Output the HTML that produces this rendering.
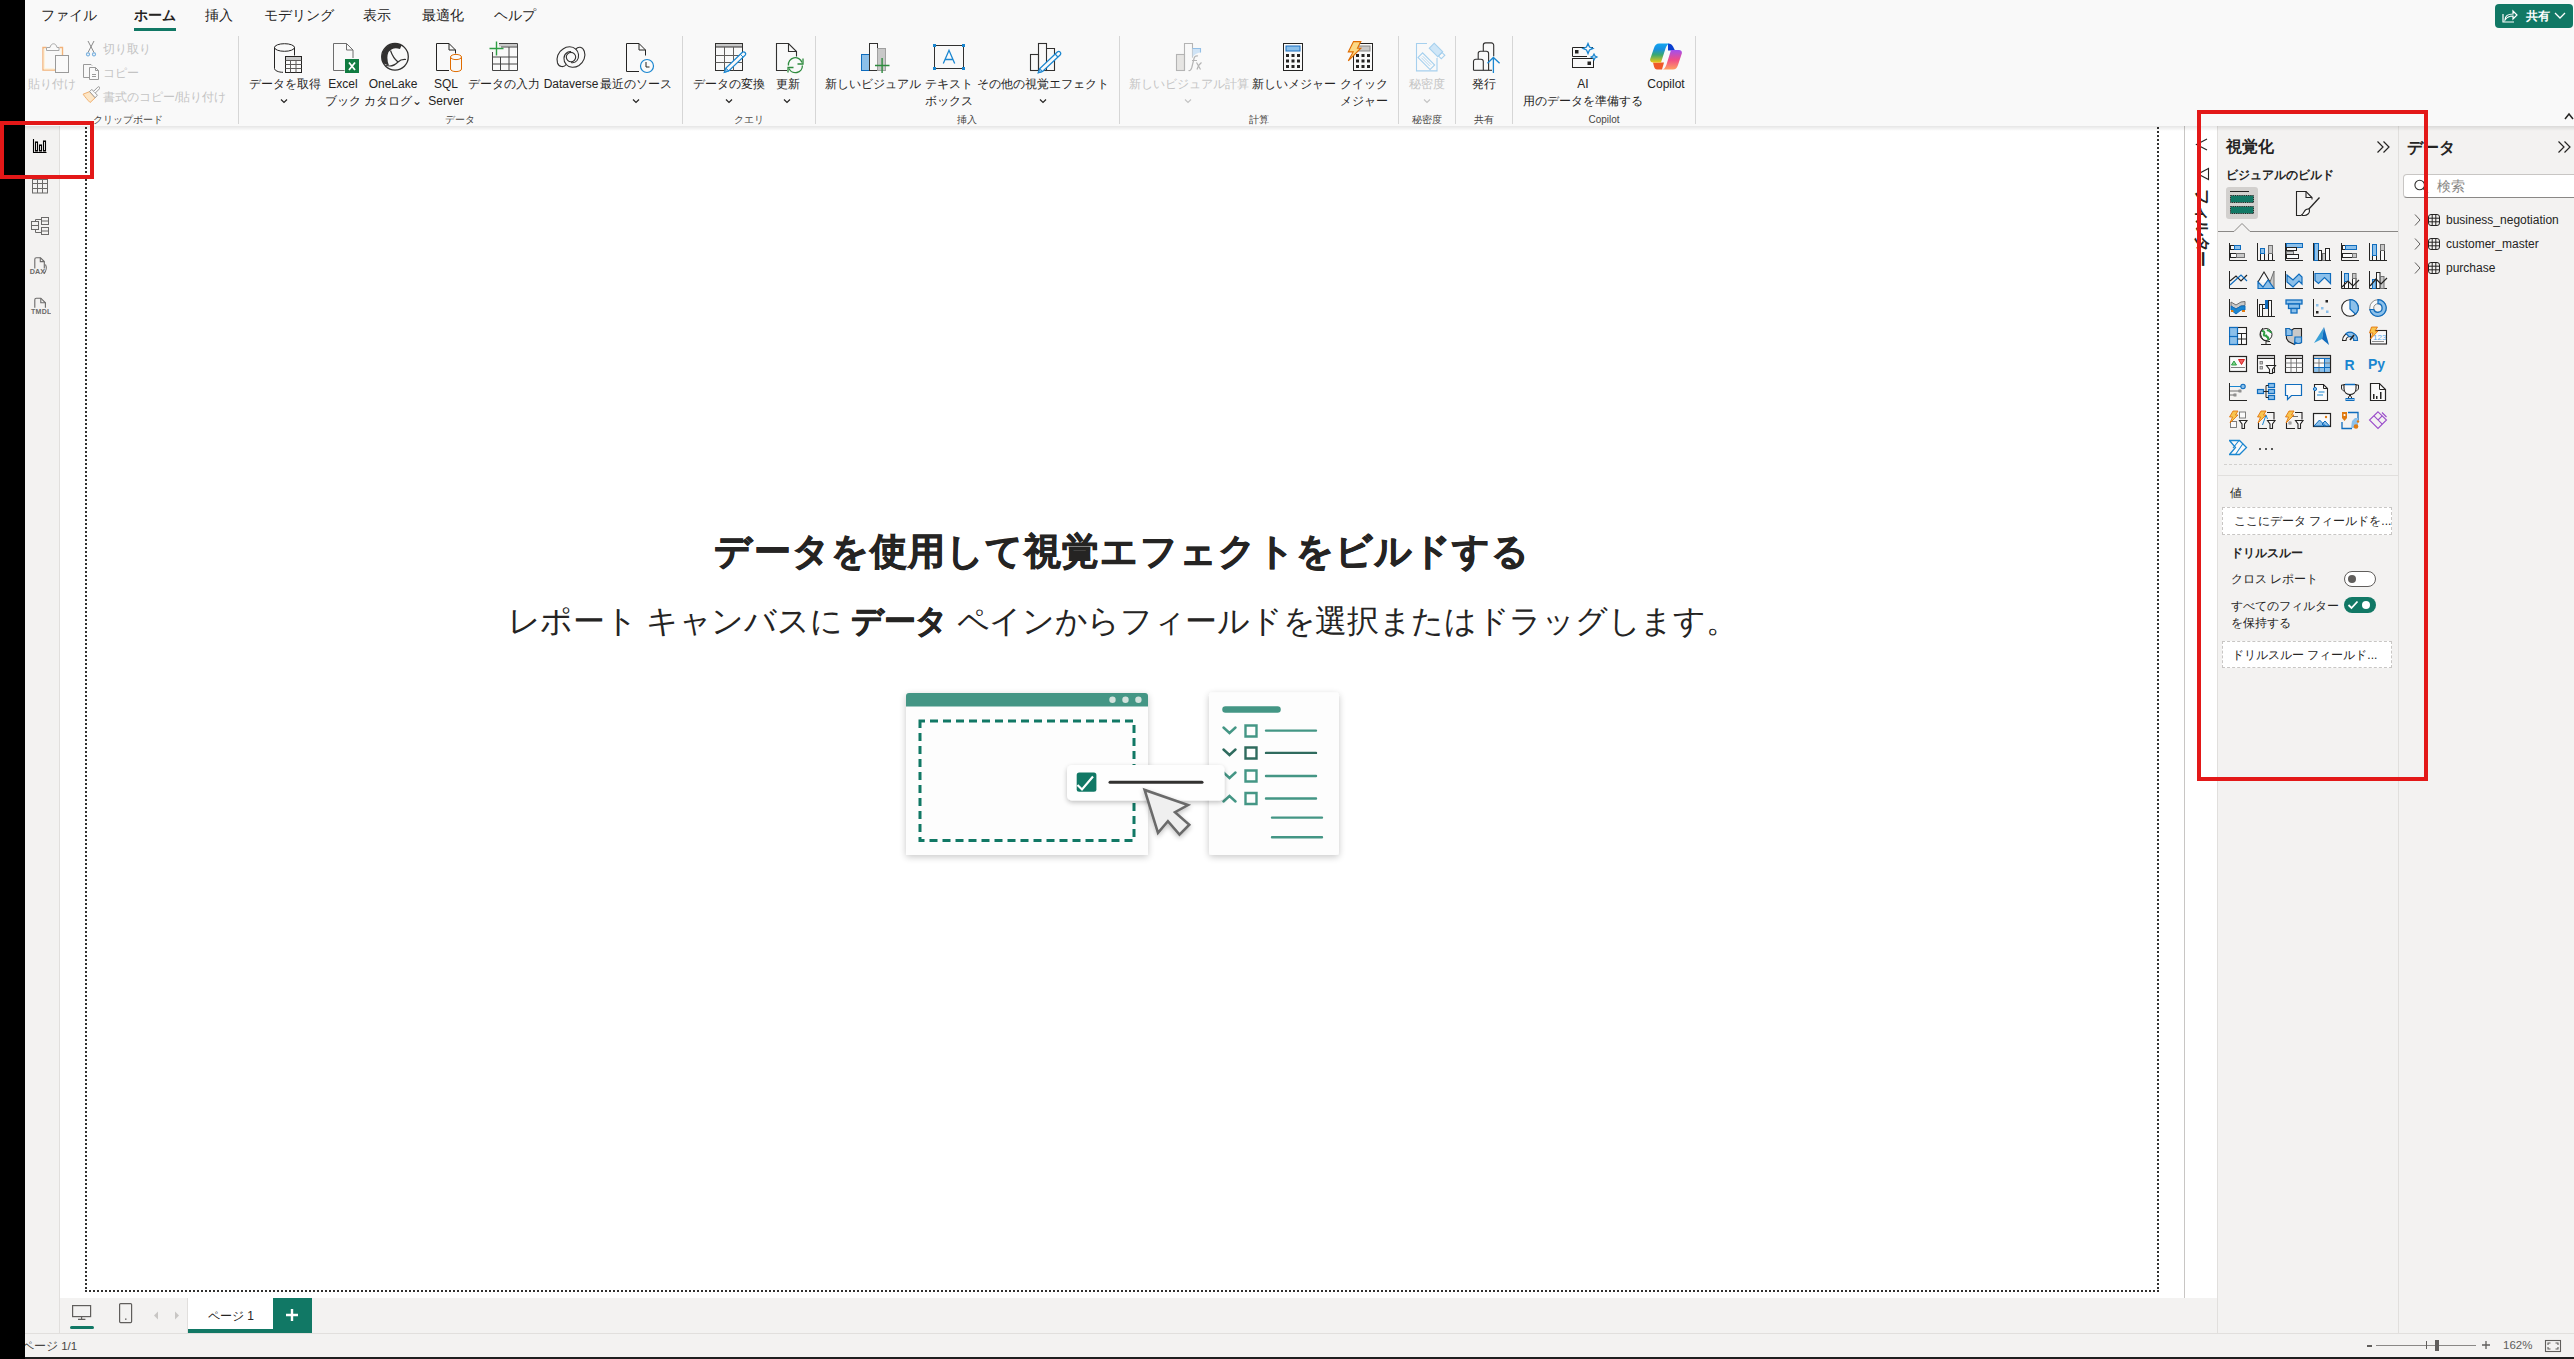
<!DOCTYPE html>
<html><head><meta charset="utf-8">
<style>
*{box-sizing:border-box;margin:0;padding:0}
html,body{width:2574px;height:1359px;overflow:hidden;background:#f3f2f1;font-family:"Liberation Sans",sans-serif;color:#252423}
.a{position:absolute}
.t{position:absolute;white-space:nowrap;line-height:1}
.tab{font-size:14px;color:#252423}

.lb{position:absolute;width:160px;text-align:center;font-size:12px;line-height:17px;white-space:nowrap;color:#252423}
.gl{position:absolute;top:114px;width:160px;text-align:center;font-size:10px;line-height:12px;color:#484644;white-space:nowrap}
.sep{position:absolute;top:36px;width:1px;height:88px;background:#d6d6d6}
.chev{position:absolute;width:8px;height:6px;fill:none;stroke:#252423;stroke-width:1.2}
.dischev{stroke:#c4c4c4}
.dis,.lb.dis{color:#c4c4c4}
#black{left:0;top:0;width:25px;height:1359px;background:#000;z-index:10}
#ribbon{left:25px;top:0;width:2549px;height:126px;background:#f9f9f9}
#ribshadow{left:25px;top:126px;width:2549px;height:5px;background:linear-gradient(rgba(0,0,0,.10),rgba(0,0,0,0));z-index:5}
#leftnav{left:25px;top:126px;width:35px;height:1207px;background:#f3f2f1;border-right:1px solid #e1dfdd}
#canvas{left:60px;top:126px;width:2157px;height:1172px;background:#fff}
#vline{left:2184px;top:126px;width:1px;height:1172px;background:#c8c6c4}
#viz{left:2217px;top:126px;width:182px;height:1207px;background:#f3f2f1;border-left:1px solid #e1dfdd;border-right:1px solid #e1dfdd}
#data{left:2399px;top:126px;width:175px;height:1207px;background:#f3f2f1}
#pagebar{left:60px;top:1298px;width:2157px;height:35px;background:#f3f2f1}
#status{left:25px;top:1333px;width:2549px;height:24px;background:#f3f2f1;border-top:1px solid #e1dfdd}
#bottomline{left:0;top:1357px;width:2574px;height:2px;background:#1f1f1f}
.dotv{position:absolute;width:2px;background:repeating-linear-gradient(to bottom,#323130 0 2px,transparent 2px 4px)}
.doth{position:absolute;height:2px;background:repeating-linear-gradient(to right,#323130 0 2px,transparent 2px 4px)}
.red{position:absolute;border:4px solid #e31818;z-index:20}
</style></head>
<body>
<div id="black" class="a"></div>
<div id="ribbon" class="a"></div>
<div id="leftnav" class="a"></div>
<div id="canvas" class="a"></div>
<div id="vline" class="a"></div>
<div id="viz" class="a"></div>
<div id="data" class="a"></div>
<div id="pagebar" class="a"></div>
<div id="status" class="a"></div>
<div id="bottomline" class="a"></div>
<div id="ribshadow" class="a"></div>
<div class="dotv" style="left:85px;top:127px;height:1165px"></div>
<div class="dotv" style="left:2157px;top:127px;height:1165px"></div>
<div class="doth" style="left:85px;top:1290px;width:2074px"></div>
<!-- ===== RIBBON TABS ===== -->
<div class="t tab" style="left:41px;top:8px">ファイル</div>
<div class="t tab" style="left:134px;top:8px;font-weight:bold">ホーム</div>
<div class="a" style="left:134px;top:28px;width:42px;height:3px;background:#117865"></div>
<div class="t tab" style="left:205px;top:8px">挿入</div>
<div class="t tab" style="left:264px;top:8px">モデリング</div>
<div class="t tab" style="left:363px;top:8px">表示</div>
<div class="t tab" style="left:422px;top:8px">最適化</div>
<div class="t tab" style="left:494px;top:8px">ヘルプ</div>

<!-- share button -->
<div class="a" style="left:2495px;top:4px;width:78px;height:24px;background:#117865;border-radius:4px"></div>
<svg class="a" style="left:2501px;top:7px" width="18" height="18" viewBox="0 0 18 18" fill="none" stroke="#fff" stroke-width="1.2"><path d="M2 7v8h11"/><path d="M4 13c0-4 3-6 8-6V4l4 4-4 4V9c-4 0-6 1-8 4z"/></svg>
<div class="t" style="left:2526px;top:10px;font-size:12px;color:#fff;font-weight:bold">共有</div>
<svg class="a" style="left:2554px;top:11px" width="12" height="9" viewBox="0 0 12 9" fill="none" stroke="#fff" stroke-width="1.3"><path d="M1 2l5 5 5-5"/></svg>

<!-- collapse ribbon chevron -->
<svg class="a" style="left:2564px;top:112px" width="10" height="8" viewBox="0 0 10 8" fill="none" stroke="#252423" stroke-width="1.5"><path d="M1 7l4-5 4 5"/></svg>

<!-- separators -->
<div class="sep" style="left:238px"></div>
<div class="sep" style="left:682px"></div>
<div class="sep" style="left:815px"></div>
<div class="sep" style="left:1119px"></div>
<div class="sep" style="left:1398px"></div>
<div class="sep" style="left:1455px"></div>
<div class="sep" style="left:1512px"></div>
<div class="sep" style="left:1695px"></div>

<!-- group labels -->
<div class="gl" style="left:48px">クリップボード</div>
<div class="gl" style="left:380px">データ</div>
<div class="gl" style="left:669px">クエリ</div>
<div class="gl" style="left:887px">挿入</div>
<div class="gl" style="left:1179px">計算</div>
<div class="gl" style="left:1347px">秘密度</div>
<div class="gl" style="left:1404px">共有</div>
<div class="gl" style="left:1524px">Copilot</div>

<!-- clipboard -->
<svg class="a" style="left:40px;top:41px" width="32" height="34" viewBox="0 0 32 34" fill="none" stroke-width="1">
 <path d="M15 29H3V6.5h3.5M19.5 6.5H22.5V14" stroke="#f2b27a" stroke-width="1.4"/>
 <path d="M14.5 27.8H4.3V7.8M21.3 7.8V13.5" stroke="#fdf0d6" stroke-width="1.2"/>
 <path d="M6.5 9.5V6.5H10c0.5-2.5 2-3.7 3.5-3.7s3 1.2 3.5 3.7h2v3z" stroke="#a8a8a8" fill="#fafafa"/>
 <rect x="15.5" y="14.5" width="13" height="17" stroke="#9a9a9a" fill="#fafafa"/>
</svg>
<div class="lb dis" style="left:-28px;top:76px">貼り付け</div>
<svg class="a" style="left:84px;top:40px" width="16" height="17" viewBox="0 0 16 17" fill="none" stroke-width="1">
 <path d="M4 1l6 11.5M10 1L4 12.5" stroke="#8a8a8a"/><rect x="2.5" y="12.8" width="3" height="3" rx="1.2" stroke="#7fb4e0" stroke-width="1.2"/><rect x="8.5" y="12.8" width="3" height="3" rx="1.2" stroke="#7fb4e0" stroke-width="1.2"/>
</svg>
<div class="t dis" style="left:103px;top:43px;font-size:12px">切り取り</div>
<svg class="a" style="left:82px;top:63px" width="18" height="18" viewBox="0 0 18 18" fill="none" stroke="#9a9a9a" stroke-width="1">
 <path d="M7.5 14.5H1.5V1.5H9l1 1"/><path d="M7.5 4.5h6l3 3v9h-9z" fill="#fafafa"/><path d="M13.5 4.5v3h3M10 11.5h4M10 13.5h4"/>
</svg>
<div class="t dis" style="left:103px;top:67px;font-size:12px">コピー</div>
<svg class="a" style="left:82px;top:86px" width="18" height="18" viewBox="0 0 18 18" fill="none" stroke-width="1">
 <path d="M7.6 5.6L1.1 8.2C3 11 6 14.5 8.1 16.5L13.2 11.8Z" stroke="#f0b070" fill="#fde6c6"/>
 <path d="M7.6 5.6L9.8 3.4 15.4 9.2 13.2 11.8Z" stroke="#9a9a9a" fill="#fafafa"/>
 <path d="M11.6 5.3L15.8 1.1a1.2 1.2 0 0 1 1.7 1.7L13.3 7" stroke="#9a9a9a" fill="#fafafa"/>
</svg>
<div class="t dis" style="left:103px;top:91px;font-size:12px">書式のコピー/貼り付け</div>

<!-- get data -->
<svg class="a" style="left:272px;top:42px" width="32" height="32" viewBox="0 0 32 32" fill="none" stroke="#252423" stroke-width="1">
 <ellipse cx="12.5" cy="5.5" rx="10" ry="3.8"/><path d="M2.5 5.5v21c0 2 4 3.8 8.5 3.8M22.5 5.5v8"/>
 <rect x="13.5" y="14.5" width="16" height="16" fill="#fafafa"/><rect x="14" y="15" width="15" height="3" fill="#c8c8c8" stroke="none"/>
 <path d="M13.5 18.5h16M13.5 22.5h16M13.5 26.5h16M18.5 18.5v12M24 18.5v12" stroke="#605e5c"/>
</svg>
<div class="lb" style="left:205px;top:76px">データを取得</div>
<svg class="chev" style="left:280px;top:98px" viewBox="0 0 8 6"><path d="M1 1.5l3 3 3-3"/></svg>

<!-- excel -->
<svg class="a" style="left:332px;top:42px" width="28" height="32" viewBox="0 0 28 32" fill="none" stroke="#6e6e6e" stroke-width="1">
 <path d="M12.5 28.5H1.5V1.5h13l6.5 6.5v8"/><path d="M14.5 1.5v6.5h6.5"/>
 <rect x="13" y="17" width="14" height="14" fill="#107c41" stroke="none"/><path d="M17 20.5l6 7.5M23 20.5l-6 7.5" stroke="#fff" stroke-width="1.8"/>
</svg>
<div class="lb" style="left:263px;top:76px">Excel<br>ブック</div>

<!-- onelake -->
<svg class="a" style="left:379px;top:42px" width="32" height="32" viewBox="0 0 32 32" fill="none" stroke="#323130" stroke-width="1.3">
 <circle cx="16" cy="14.8" r="13.3"/>
 <path d="M4.5 21.5A13.3 13.3 0 0 1 22.6 3.3L21 7Q14 4.5 9.5 10Q7 16 10 23.5Z" fill="#323130" stroke="none"/>
 <path d="M11.5 8.5Q14 16 19 20Q22 17 27 17.5M6.6 23Q13 26 19 20" stroke-width="1.2"/>
</svg>
<div class="lb" style="left:313px;top:76px">OneLake<br>カタログ⌄</div>

<!-- sql -->
<svg class="a" style="left:435px;top:42px" width="30" height="32" viewBox="0 0 30 32" fill="none" stroke="#252423" stroke-width="1">
 <path d="M14 28.5H1.5V1.5h12.5l6.5 6.5v3.5"/><path d="M14 1.5v6.5h6.5"/>
 <path d="M15.5 15v12c0 1.5 2.5 2.6 5.5 2.6s5.5-1.1 5.5-2.6V15" stroke="#e06c00"/><ellipse cx="21" cy="15" rx="5.5" ry="2.6" stroke="#e06c00" fill="#fafafa"/>
</svg>
<div class="lb" style="left:366px;top:76px">SQL<br>Server</div>

<!-- enter data -->
<svg class="a" style="left:488px;top:40px" width="32" height="32" viewBox="0 0 32 32" fill="none" stroke="#252423" stroke-width="1">
 <rect x="11" y="3" width="18" height="3.5" fill="#c8c8c8" stroke="none"/>
 <path d="M11 3.5h18.5v27H4.5V12M4.5 17h25M4.5 24h25M12.5 17v13.5M21 7v23.5M13 7h16" stroke="#444"/>
 <path d="M8.5 1.5v14M1.5 8.5h14" stroke="#2e9e44" stroke-width="1.4"/>
</svg>
<div class="lb" style="left:424px;top:76px">データの入力</div>

<!-- dataverse -->
<svg class="a" style="left:555px;top:44px" width="32" height="26" viewBox="0 0 32 26" fill="none" stroke="#323130" stroke-width="1.1">
 <path d="M11.2 20.5C9 23.5 4 23.5 2.5 19C1 14 3 8 8 5C12 2 17.5 2 20.8 5.1C23 2.5 27.5 2 29.3 7.3C31 12 29 18 24 21.5C20 24 14 24 11.2 20.5Z"/>
 <path d="M11.2 20.5C8 17 8 11 12.5 8.3C14 7.5 15 7.5 16 7.6M20.8 5.1C24 8 24.5 13 22 16.5C20.5 18.5 18 19 16 18.5"/>
 <circle cx="16" cy="13.1" r="4.7"/>
</svg>
<div class="lb" style="left:491px;top:76px">Dataverse</div>

<!-- recent -->
<svg class="a" style="left:625px;top:42px" width="30" height="32" viewBox="0 0 30 32" fill="none" stroke="#252423" stroke-width="1">
 <path d="M14 29.5H1.5V1.5h12.5l6.5 6.5v5.5"/><path d="M14 1.5v6.5h6.5"/>
 <circle cx="22" cy="24" r="6.5" stroke="#1a86d0" stroke-width="1.2" fill="#fafafa"/><path d="M21 20v5h3.5" stroke="#252423"/>
</svg>
<div class="lb" style="left:556px;top:76px">最近のソース</div>
<svg class="chev" style="left:632px;top:98px" viewBox="0 0 8 6"><path d="M1 1.5l3 3 3-3"/></svg>

<!-- transform -->
<svg class="a" style="left:713px;top:42px" width="34" height="32" viewBox="0 0 34 32" fill="none" stroke="#605e5c" stroke-width="1">
 <rect x="2.5" y="1.5" width="27" height="27" stroke="#323130"/><rect x="3" y="2" width="26" height="3" fill="#c8c8c8" stroke="none"/>
 <path d="M2.5 5h27" stroke="#323130"/>
 <path d="M2.5 13.5h27M2.5 20.5h27M11.5 5v23.5M20.5 5v23.5"/>
 <path d="M11.4 30.3L12.9 26.1 29.4 10.3A2 2 0 0 1 32.2 13.1L15.7 28.9Z" fill="#fafafa" stroke="#1a86d0" stroke-width="1.3"/>
 <path d="M11.4 30.3L12.9 26.1 15.7 28.9Z" fill="#8cc0ea" stroke="#1a86d0" stroke-width="1"/><path d="M27.3 12.3l2.8 2.8" stroke="#1a86d0"/>
</svg>
<div class="lb" style="left:649px;top:76px">データの変換</div>
<svg class="chev" style="left:725px;top:98px" viewBox="0 0 8 6"><path d="M1 1.5l3 3 3-3"/></svg>

<!-- refresh -->
<svg class="a" style="left:775px;top:42px" width="30" height="32" viewBox="0 0 30 32" fill="none" stroke="#323130" stroke-width="1.1">
 <path d="M12 28.5H1.5V1.5h12l8 8v5"/><path d="M13.5 1.5v8h8"/>
 <path d="M13.4 23.5A7 7 0 0 1 27 20.5M27.4 23.5A7 7 0 0 1 14 26.5" stroke="#2e8b3e" stroke-width="1.3"/>
 <path d="M28 16.5v5.5h-5.5M18.5 25.5H13v5" stroke="#2e8b3e" stroke-width="1.3"/>
</svg>
<div class="lb" style="left:708px;top:76px">更新</div>
<svg class="chev" style="left:783px;top:98px" viewBox="0 0 8 6"><path d="M1 1.5l3 3 3-3"/></svg>

<!-- new visual -->
<svg class="a" style="left:859px;top:42px" width="32" height="32" viewBox="0 0 32 32" fill="none" stroke="#323130" stroke-width="1">
 <rect x="2.5" y="12.5" width="8" height="16" fill="#8cc0ea" stroke="#0f6cbd"/>
 <rect x="10.5" y="1.5" width="8" height="27" fill="#fafafa"/><rect x="18.5" y="6.5" width="8" height="22" fill="#c8c8c8" stroke="#a0a0a0"/>
 <path d="M23.1 16v15M16 23.5h14.5" stroke="#2e8b3e" stroke-width="1.4"/>
</svg>
<div class="lb" style="left:793px;top:76px">新しいビジュアル</div>

<!-- text box -->
<svg class="a" style="left:932px;top:43px" width="34" height="28" viewBox="0 0 34 28" fill="none" stroke="#323130" stroke-width="1">
 <rect x="2.5" y="2.5" width="29" height="23"/>
 <rect x="1" y="1" width="3" height="3" fill="#1a86d0" stroke="none"/><rect x="30" y="1" width="3" height="3" fill="#1a86d0" stroke="none"/>
 <rect x="1" y="24" width="3" height="3" fill="#1a86d0" stroke="none"/><rect x="30" y="24" width="3" height="3" fill="#1a86d0" stroke="none"/>
 <path d="M11.3 20.5L17 7.3l5.7 13.2M13.2 16.5h7.6" stroke="#1a86d0" stroke-width="1.3"/>
</svg>
<div class="lb" style="left:869px;top:76px">テキスト<br>ボックス</div>

<!-- more visuals -->
<svg class="a" style="left:1028px;top:42px" width="34" height="32" viewBox="0 0 34 32" fill="none" stroke="#323130" stroke-width="1.1">
 <rect x="2.5" y="12.5" width="8" height="16"/><rect x="10.5" y="1.5" width="8" height="27"/><path d="M18.5 6.5h8v22h-8"/>
 <path d="M10.3 30.7L11.8 26.5 29.3 10A2 2 0 0 1 32.1 13L14.6 29.5Z" fill="#fafafa" stroke="#1a86d0" stroke-width="1.3"/>
 <path d="M10.3 30.7L11.8 26.5 14.6 29.5Z" fill="#8cc0ea" stroke="#1a86d0" stroke-width="1"/><path d="M27.1 12l2.8 3" stroke="#1a86d0"/>
</svg>
<div class="lb" style="left:963px;top:76px">その他の視覚エフェクト</div>
<svg class="chev" style="left:1039px;top:98px" viewBox="0 0 8 6"><path d="M1 1.5l3 3 3-3"/></svg>

<!-- new visual calc (disabled) -->
<svg class="a" style="left:1175px;top:42px" width="30" height="32" viewBox="0 0 30 32" fill="none" stroke="#b4b4b4" stroke-width="1.1">
 <rect x="1.5" y="12.5" width="8" height="16" fill="#e6e5e3"/><path d="M10 28.5H1.5M9.5 28.5V1.5h8v14"/>
 <path d="M17.5 6.5h8v4C21 11 19 13 17.5 15.5Z" fill="#cfe3f5" stroke="none"/><path d="M17.5 6.5h8v4" stroke="#93bfe6"/>
 <path d="M13.5 28.5C15 29 16 28 16.8 25.5L19 16.5C19.5 14.5 21 13.5 23 14M17 18.5h5M21.5 20.5l4 7M26.5 20.5c-1.5 1-3.5 4-4.5 7" stroke-width="1.2"/>
</svg>
<div class="lb dis" style="left:1109px;top:76px">新しいビジュアル計算</div>
<svg class="chev dischev" style="left:1184px;top:98px" viewBox="0 0 8 6"><path d="M1 1.5l3 3 3-3"/></svg>

<!-- new measure -->
<svg class="a" style="left:1282px;top:42px" width="22" height="30" viewBox="0 0 22 30" fill="none" stroke="#252423" stroke-width="1">
 <rect x="1.5" y="1.5" width="19" height="27"/><rect x="4" y="4" width="14" height="5" fill="#8cc0ea" stroke="#1a6fc0"/>
 <g fill="#252423" stroke="none"><rect x="4" y="12" width="3" height="3"/><rect x="9.5" y="12" width="3" height="3"/><rect x="15" y="12" width="3" height="3"/>
 <rect x="4" y="17.5" width="3" height="3"/><rect x="9.5" y="17.5" width="3" height="3"/><rect x="15" y="17.5" width="3" height="3"/>
 <rect x="4" y="23" width="3" height="3"/><rect x="9.5" y="23" width="3" height="3"/><rect x="15" y="23" width="3" height="3"/></g>
</svg>
<div class="lb" style="left:1214px;top:76px">新しいメジャー</div>

<!-- quick measure -->
<svg class="a" style="left:1346px;top:41px" width="28" height="31" viewBox="0 0 28 31" fill="none" stroke="#252423" stroke-width="1">
 <rect x="7.5" y="2.5" width="19" height="27"/><rect x="10" y="5" width="14" height="5" fill="#c8c8c8" stroke="#888"/>
 <g fill="#252423" stroke="none"><rect x="10" y="13" width="3" height="3"/><rect x="15.5" y="13" width="3" height="3"/><rect x="21" y="13" width="3" height="3"/>
 <rect x="10" y="18.5" width="3" height="3"/><rect x="15.5" y="18.5" width="3" height="3"/><rect x="21" y="18.5" width="3" height="3"/>
 <rect x="10" y="24" width="3" height="3"/><rect x="15.5" y="24" width="3" height="3"/><rect x="21" y="24" width="3" height="3"/></g>
 <path d="M7.5 0.6h7.3l-3.3 6.6h3.3L2.3 19.8l4.9-8.9H2.3z" fill="#fbd985" stroke="#e06c00" stroke-width="1.1" stroke-linejoin="miter"/>
</svg>
<div class="lb" style="left:1284px;top:76px">クイック<br>メジャー</div>

<!-- sensitivity (disabled) -->
<svg class="a" style="left:1414px;top:41px" width="32" height="32" viewBox="0 0 32 32" fill="none" stroke="#a6d0ee" stroke-width="1.1">
 <path d="M13 2.5H2.5v27.4h20.5V17"/>
 <g transform="rotate(45 12.5 20)"><rect x="4" y="17" width="17" height="6.5"/><path d="M6.5 19.3h12M6.5 21.3h12" stroke-width="0.8"/></g>
 <g transform="rotate(45 22 9)"><rect x="16" y="5.5" width="12" height="7" fill="#cfe6f7"/><rect x="28" y="6.5" width="4" height="5"/></g>
</svg>
<div class="lb dis" style="left:1347px;top:76px">秘密度</div>
<svg class="chev dischev" style="left:1423px;top:98px" viewBox="0 0 8 6"><path d="M1 1.5l3 3 3-3"/></svg>

<!-- publish -->
<svg class="a" style="left:1471px;top:42px" width="32" height="32" viewBox="0 0 32 32" fill="none" stroke="#323130" stroke-width="1.1">
 <path d="M2.5 28.3V19.5a2.3 2.3 0 0 1 2.3-2.3h5.2a2.3 2.3 0 0 1 2.3 2.3v8.8"/>
 <path d="M7.2 17.2v-5.7a2.3 2.3 0 0 1 2.3-2.3h5.8a2.3 2.3 0 0 1 2.3 2.3v16.8"/>
 <path d="M12.3 9.2V3.2a2.3 2.3 0 0 1 2.3-2.3h5.8a2.3 2.3 0 0 1 2.3 2.3v11"/>
 <path d="M2.5 28.3h18.5"/>
 <path d="M22.4 15.5V31M16.5 21.2l5.9-5.7 6.2 5.7" stroke="#1a86d0" stroke-width="1.3"/>
</svg>
<div class="lb" style="left:1404px;top:76px">発行</div>

<!-- AI prep -->
<svg class="a" style="left:1570px;top:42px" width="30" height="28" viewBox="0 0 30 28" fill="none" stroke="#252423" stroke-width="1">
 <path d="M23 5.5H2.5v9h14.5"/><rect x="2.5" y="16.5" width="21" height="9"/>
 <rect x="5" y="8" width="3.5" height="3.5" fill="#252423" stroke="none"/><rect x="17.5" y="19.5" width="3.5" height="3.5" fill="#252423" stroke="none"/>
 <path d="M18 1.5l1.5 3.5 3.5 1.5-3.5 1.5L18 11.5l-1.5-3.5L13 6.5l3.5-1.5z" stroke="#1a86d0" stroke-width="1.3" fill="#fafafa"/><path d="M24 12l1 2 2 1-2 1-1 2-1-2-2-1 2-1z" stroke="#1a86d0" stroke-width="1.2" fill="#d8eaf8"/>
</svg>
<div class="lb" style="left:1503px;top:76px">AI<br>用のデータを準備する</div>

<!-- copilot -->
<svg class="a" style="left:1650px;top:43px" width="32" height="28" viewBox="0 0 32 28">
 <defs>
  <linearGradient id="cpA" x1="0" y1="0" x2="0" y2="1"><stop offset="0" stop-color="#12a6f0"/><stop offset=".3" stop-color="#1890e0"/><stop offset=".6" stop-color="#3aa870"/><stop offset="1" stop-color="#f0c810"/></linearGradient>
  <linearGradient id="cpB" x1="0" y1="0" x2="0" y2="1"><stop offset="0" stop-color="#a050f0"/><stop offset=".5" stop-color="#f04c88"/><stop offset="1" stop-color="#ffa060"/></linearGradient>
 </defs>
 <path d="M18 0.5c2.5 0 4 1 5 3l2 4H18z" fill="#0a3fd0"/>
 <path d="M7 26.5c-1.5 0-2.5-1-3-3l-1-4h11l-2 7z" fill="#f05a28"/>
 <path d="M9 0.5h11c-2 0-3.5 2-4.5 5L11 19.5H3c-2 0-3.3-1.5-2.8-3.5L4 5c1-3 2.5-4.5 5-4.5z" fill="url(#cpA)"/>
 <path d="M23 26.5H12c2 0 3.5-2 4.5-5l4.5-14.5h8c2 0 3.3 1.5 2.8 3.5L28 22c-1 3-2.5 4.5-5 4.5z" fill="url(#cpB)"/>
</svg>
<div class="lb" style="left:1586px;top:76px">Copilot</div>
<!-- ===== LEFT NAV ===== -->
<svg class="a" style="left:32px;top:138px" width="16" height="16" viewBox="0 0 16 16" fill="none" stroke="#000" stroke-width="1.1">
 <path d="M1.5 1v13.5h13"/><rect x="3.5" y="4" width="2" height="9"/><rect x="7.5" y="7" width="2" height="6"/><rect x="11.5" y="3" width="2" height="10"/>
</svg>
<svg class="a" style="left:31px;top:178px" width="18" height="17" viewBox="0 0 18 17" fill="none" stroke="#6b6a69" stroke-width="1">
 <rect x="1.5" y="1.5" width="15" height="13.5"/><path d="M1.5 5.5h15M1.5 10.5h15M6.5 1.5v13.5M11.5 1.5v13.5"/>
</svg>
<svg class="a" style="left:30px;top:216px" width="20" height="20" viewBox="0 0 20 20" fill="none" stroke="#6b6a69" stroke-width="1">
 <rect x="1.5" y="5.5" width="7" height="8"/><path d="M1.5 9.5h7"/>
 <rect x="11.5" y="1.5" width="7" height="7"/><path d="M11.5 5h7"/>
 <rect x="11.5" y="11.5" width="7" height="7"/><path d="M11.5 15h7"/>
 <path d="M5.5 5.5V3.5h6M5.5 13.5v3h6"/>
</svg>
<svg class="a" style="left:28px;top:256px" width="22" height="20" viewBox="0 0 22 20" fill="none" stroke="#6b6a69" stroke-width="1.1">
 <path d="M6.8 12.5V3.3a1.5 1.5 0 0 1 1.5-1.5h4.2l3.8 3.8v6.9"/><path d="M12.3 1.8v3.8h3.8"/><path d="M17.5 8.5c1.2 2.5 1 6.5-1.5 9"/>
 <text x="1.8" y="18" font-family="Liberation Sans" font-size="7.2" font-weight="bold" fill="#6b6a69" stroke="none">DAX</text>
</svg>
<svg class="a" style="left:29px;top:296px" width="22" height="20" viewBox="0 0 22 20" fill="none" stroke="#6b6a69" stroke-width="1.1">
 <path d="M5.8 11.7V3.7a1.5 1.5 0 0 1 1.5-1.5h4.5l4.6 4.6v4.9"/><path d="M11.8 2.2v4.6h4.6"/>
 <text x="2" y="18" font-family="Liberation Sans" font-size="7" font-weight="bold" letter-spacing="0.3" fill="#6b6a69" stroke="none">TMDL</text>
</svg>
<!-- heading -->
<div class="t" style="left:60px;width:2125px;top:533px;text-align:center;font-size:37px;font-weight:bold;letter-spacing:1.1px;-webkit-text-stroke:0.8px #252423">データを使用して視覚エフェクトをビルドする</div>
<div class="t" style="left:60px;width:2125px;top:605px;text-align:center;font-size:32px;letter-spacing:-0.3px">レポート キャンバスに <b style="-webkit-text-stroke:0.6px #252423">データ</b> ペインからフィールドを選択またはドラッグします。</div>
<!-- illustration -->
<svg class="a" style="left:880px;top:670px" width="480" height="210" viewBox="880 670 480 210">
 <defs>
  <filter id="sh" x="-20%" y="-20%" width="140%" height="150%"><feGaussianBlur in="SourceAlpha" stdDeviation="3.5"/><feOffset dy="2"/><feComponentTransfer><feFuncA type="linear" slope="0.22"/></feComponentTransfer><feMerge><feMergeNode/><feMergeNode in="SourceGraphic"/></feMerge></filter>
  <filter id="sh2" x="-20%" y="-40%" width="140%" height="190%"><feGaussianBlur in="SourceAlpha" stdDeviation="2.5"/><feOffset dy="1.5"/><feComponentTransfer><feFuncA type="linear" slope="0.25"/></feComponentTransfer><feMerge><feMergeNode/><feMergeNode in="SourceGraphic"/></feMerge></filter>
 </defs>
 <!-- left window -->
 <g filter="url(#sh)">
  <path d="M906 696a3 3 0 0 1 3-3h236a3 3 0 0 1 3 3v159H906z" fill="#fdfdfd"/>
 </g>
 <path d="M906 696a3 3 0 0 1 3-3h236a3 3 0 0 1 3 3v10.5H906z" fill="#449685"/>
 <circle cx="1112.5" cy="699.7" r="3.2" fill="#d3e2dd"/><circle cx="1125.5" cy="699.7" r="3.2" fill="#d3e2dd"/><circle cx="1138.4" cy="699.7" r="3.2" fill="#d3e2dd"/>
 <rect x="920" y="721" width="214" height="119.5" fill="none" stroke="#117865" stroke-width="3" stroke-dasharray="8 5" stroke-dashoffset="3"/>
 <!-- right panel -->
 <g filter="url(#sh)">
  <rect x="1209" y="692.5" width="130" height="162.5" rx="3" fill="#fdfdfd"/>
 </g>
 <path d="M1225.5 709.5h52" stroke="#449685" stroke-width="6.5" stroke-linecap="round"/>
 <g fill="none" stroke-width="2.4" stroke-linecap="round">
  <path d="M1223.5 727.5l6 5.5 6-5.5M1245.5 725.5h11v11h-11zM1266 730.6h50" stroke="#449685"/>
  <path d="M1223.5 749.5l6 5.5 6-5.5M1245.5 747.5h11v11h-11zM1266 752.9h50" stroke="#2f6b5e"/>
  <path d="M1223.5 772.5l6 5.5 6-5.5M1245.5 770.5h11v11h-11zM1266 776h50" stroke="#449685"/>
  <path d="M1223.5 801.5l6-5.5 6 5.5M1245.5 793h11v11h-11zM1266 798.5h50" stroke="#449685"/>
  <path d="M1272 817.6h50M1272 837.3h50" stroke="#449685"/>
 </g>
 <!-- popup -->
 <g filter="url(#sh2)">
  <rect x="1067" y="765" width="157.5" height="35.5" rx="5" fill="#fefefe"/>
 </g>
 <rect x="1076.7" y="772.6" width="19.7" height="19.1" rx="2.5" fill="#117865"/>
 <path d="M1077.5 785l4.5 4.5 11-13" fill="none" stroke="#fff" stroke-width="2.2"/>
 <path d="M1110 782.3h92" stroke="#323130" stroke-width="3" stroke-linecap="round"/>
 <!-- cursor -->
 <g filter="url(#sh2)">
  <path d="M1144.6 789.9L1158 832.8l9.9-11.6 11.6 13.4 9.8-9.9-14.3-12.5 13-7.1z" fill="#efefef" stroke="#6b6b6b" stroke-width="2.6" stroke-linejoin="miter"/>
 </g>
</svg>
<!-- ===== FILTER STRIP ===== -->
<svg class="a" style="left:2195px;top:138px" width="13" height="14" viewBox="0 0 13 14" fill="none" stroke="#252423" stroke-width="1.1"><path d="M12 1L1.5 6.5 12 12"/></svg>
<svg class="a" style="left:2196px;top:167px" width="14" height="14" viewBox="0 0 14 14" fill="none" stroke="#252423" stroke-width="1.1"><path d="M12.5 1.5v11L2 7z"/></svg>
<div class="t" style="left:2162px;top:220px;width:80px;height:16px;font-size:16px;font-weight:bold;letter-spacing:-0.6px;transform:rotate(90deg);text-align:center;color:#252423">フィルター</div>

<!-- ===== VISUALIZATIONS PANE ===== -->
<div class="t" style="left:2226px;top:139px;font-size:16px;font-weight:bold">視覚化</div>
<svg class="a" style="left:2376px;top:140px" width="15" height="14" viewBox="0 0 15 14" fill="none" stroke="#252423" stroke-width="1.2"><path d="M1.5 1.5L7 7l-5.5 5.5M7.5 1.5L13 7l-5.5 5.5"/></svg>
<div class="t" style="left:2226px;top:169px;font-size:12px;font-weight:bold">ビジュアルのビルド</div>
<div class="a" style="left:2226px;top:187px;width:32px;height:32px;background:#d2d0ce;border-radius:3px"></div>
<svg class="a" style="left:2226px;top:187px" width="32" height="32" viewBox="0 0 32 32">
 <path d="M4 4.5h19" stroke="#252423" stroke-width="1"/>
 <rect x="4.5" y="8.5" width="23" height="7" fill="#117865" stroke="#252423" stroke-width="1" stroke-dasharray="1.2 1"/>
 <rect x="4.5" y="19.5" width="23" height="7" fill="#117865" stroke="#252423" stroke-width="1" stroke-dasharray="1.2 1"/>
</svg>
<svg class="a" style="left:2295px;top:190px" width="28" height="27" viewBox="0 0 28 27" fill="none" stroke="#252423" stroke-width="1.1">
 <path d="M6 25.5H1.5V1.5h9.5l6 6v2"/><path d="M11 1.5v6h6"/>
 <path d="M24.5 7.5L13 20" stroke-width="1.3"/><path d="M13 19c-2 0-3 1-4 3s-2 3-3 3c3 1 6 0 7-1s2-3 1-5z" fill="#fff"/>
</svg>
<!-- separator with notch -->
<svg class="a" style="left:2218px;top:222px" width="180" height="12" viewBox="0 0 180 12" fill="none" stroke="#8a8886" stroke-width="1"><path d="M0 9.5h16l8-8 8 8h148"/></svg>
<svg class="a" style="left:2229px;top:243px" width="170" height="230" viewBox="0 0 170 230" shape-rendering="geometricPrecision">
<g transform="translate(0 0)"><path d="M0.5 0V17.5H18" stroke="#252423" stroke-width="1" fill="none"/><rect x="1.5" y="2.5" width="4" height="4" fill="#fafafa" stroke="#252423" stroke-width="1"/><rect x="5.5" y="2.5" width="6" height="4" fill="#8cc0ea" stroke="#0f6cbd" stroke-width="1"/><rect x="1.5" y="10.5" width="6" height="4" fill="#fafafa" stroke="#252423" stroke-width="1"/><rect x="7.5" y="10.5" width="8" height="4" fill="#c8c8c8" stroke="#707070" stroke-width="1"/></g>
<g transform="translate(28 0)"><path d="M0.5 0V17.5H18" stroke="#252423" stroke-width="1" fill="none"/><rect x="3.5" y="10.5" width="4" height="7" fill="#fafafa" stroke="#252423" stroke-width="1"/><rect x="3.5" y="5.5" width="4" height="5" fill="#8cc0ea" stroke="#0f6cbd" stroke-width="1"/><rect x="11.5" y="10.5" width="4" height="7" fill="#fafafa" stroke="#252423" stroke-width="1"/><rect x="11.5" y="2.5" width="4" height="8" fill="#c8c8c8" stroke="#707070" stroke-width="1"/></g>
<g transform="translate(56 0)"><path d="M0.5 0V17.5H18" stroke="#252423" stroke-width="1" fill="none"/><rect x="1.5" y="0.5" width="16" height="4" fill="#8cc0ea" stroke="#0f6cbd" stroke-width="1"/><rect x="1.5" y="4.5" width="10" height="3" fill="#fafafa" stroke="#252423" stroke-width="1"/><rect x="1.5" y="8.5" width="7" height="3" fill="#c8c8c8" stroke="#707070" stroke-width="1"/><rect x="1.5" y="11.5" width="12" height="4" fill="#fafafa" stroke="#252423" stroke-width="1"/></g>
<g transform="translate(84 0)"><path d="M0.5 0V17.5H18" stroke="#252423" stroke-width="1" fill="none"/><rect x="1.5" y="0.5" width="4" height="17" fill="#8cc0ea" stroke="#0f6cbd" stroke-width="1"/><rect x="5.5" y="7.5" width="3" height="10" fill="#fafafa" stroke="#252423" stroke-width="1"/><rect x="9.5" y="10.5" width="3" height="7" fill="#c8c8c8" stroke="#707070" stroke-width="1"/><rect x="12.5" y="5.5" width="4" height="12" fill="#fafafa" stroke="#252423" stroke-width="1"/></g>
<g transform="translate(112 0)"><path d="M0.5 0V17.5H18" stroke="#252423" stroke-width="1" fill="none"/><rect x="1.5" y="2.5" width="3" height="4" fill="#fafafa" stroke="#252423" stroke-width="1"/><rect x="4.5" y="2.5" width="11" height="4" fill="#8cc0ea" stroke="#0f6cbd" stroke-width="1"/><rect x="1.5" y="10.5" width="10" height="4" fill="#fafafa" stroke="#252423" stroke-width="1"/><rect x="11.5" y="10.5" width="4" height="4" fill="#c8c8c8" stroke="#707070" stroke-width="1"/></g>
<g transform="translate(140 0)"><path d="M0.5 0V17.5H18" stroke="#252423" stroke-width="1" fill="none"/><rect x="3.5" y="12.5" width="4" height="5" fill="#fafafa" stroke="#252423" stroke-width="1"/><rect x="3.5" y="1.5" width="4" height="11" fill="#8cc0ea" stroke="#0f6cbd" stroke-width="1"/><rect x="11.5" y="7.5" width="4" height="10" fill="#fafafa" stroke="#252423" stroke-width="1"/><rect x="11.5" y="1.5" width="4" height="6" fill="#c8c8c8" stroke="#707070" stroke-width="1"/></g>
<g transform="translate(0 28)"><path d="M0.5 0V17.5H18" stroke="#252423" stroke-width="1" fill="none"/><path d="M1 10l6-5 5 5 6-6" stroke="#252423" fill="none" stroke-width="1.2"/><path d="M1 14l11-10 6 6" stroke="#0f6cbd" fill="none" stroke-width="1.2"/></g>
<g transform="translate(28 28)"><path d="M1 11l6-10 6 10" fill="#fafafa" stroke="#252423" stroke-width="1.1"/><path d="M13 11l4-11v17H13z" fill="#c8c8c8" stroke="#707070"/><path d="M1 11l5 5 5-7 6 8.5H1z" fill="#8cc0ea" stroke="#0f6cbd" stroke-width="1.2"/></g>
<g transform="translate(56 28)"><path d="M0.5 0V17.5H18" stroke="#252423" stroke-width="1" fill="none"/><path d="M2 4l6 5 6-6 3 3v7l-3-3-6 6-6-5z" fill="#8cc0ea" stroke="#0f6cbd" stroke-width="1.2"/></g>
<g transform="translate(84 28)"><path d="M0.5 0V17.5H18" stroke="#252423" stroke-width="1" fill="none"/><path d="M2 2.5h15.5v10l-6-6-6 6-3.5-3z" fill="#8cc0ea" stroke="#0f6cbd" stroke-width="1.2"/></g>
<g transform="translate(112 28)"><path d="M0.5 0V17.5H18" stroke="#252423" stroke-width="1" fill="none"/><rect x="3.5" y="10.5" width="4" height="7" fill="#fafafa" stroke="#252423" stroke-width="1"/><rect x="3.5" y="2.5" width="4" height="8" fill="#8cc0ea" stroke="#0f6cbd" stroke-width="1"/><rect x="11.5" y="7.5" width="3.5" height="10" fill="#fafafa" stroke="#252423" stroke-width="1"/><rect x="11.5" y="2.5" width="3.5" height="5" fill="#c8c8c8" stroke="#707070" stroke-width="1"/><path d="M1 16l6-6 5 5 6-6" stroke="#252423" fill="none" stroke-width="1.2"/></g>
<g transform="translate(140 28)"><path d="M0.5 0V17.5H18" stroke="#252423" stroke-width="1" fill="none"/><rect x="3.5" y="8.5" width="3.5" height="9" fill="#8cc0ea" stroke="#0f6cbd" stroke-width="1"/><rect x="7.5" y="1.5" width="3.5" height="16" fill="#fafafa" stroke="#252423" stroke-width="1"/><rect x="11.5" y="5.5" width="3.5" height="12" fill="#c8c8c8" stroke="#707070" stroke-width="1"/><path d="M1 15l6-7 5 5 6-6" stroke="#252423" fill="none" stroke-width="1.2"/></g>
<g transform="translate(0 56)"><path d="M0.5 0V17.5H18" stroke="#252423" stroke-width="1" fill="none"/><path d="M2 3l5 3 5-3 4-0.5v4l-4 0.5-5 3-5-3z" fill="#c8c8c8" stroke="#707070"/><path d="M2 7l5 3 5-3 4 0v4l-4 0-5 4-5-4z" fill="#1a86d0" stroke="#0f6cbd"/><path d="M2 11h2l1 2H2zM13 11h3v2h-3z" fill="#e07a10"/></g>
<g transform="translate(28 56)"><path d="M0.5 0V17.5H18" stroke="#252423" stroke-width="1" fill="none"/><rect x="2.5" y="5.5" width="3" height="12" fill="#fafafa" stroke="#252423" stroke-width="1"/><rect x="5.5" y="5.5" width="3" height="4" fill="#fafafa" stroke="#252423" stroke-width="1"/><rect x="8.5" y="1.5" width="2" height="8" fill="#0f6cbd" stroke="#0f6cbd" stroke-width="1"/><rect x="11.5" y="1.5" width="3" height="16" fill="#fafafa" stroke="#252423" stroke-width="1"/></g>
<g transform="translate(56 56)"><rect x="1" y="1" width="16" height="4" fill="#8cc0ea" stroke="#0f6cbd" stroke-width="1.3"/><rect x="3.5" y="5" width="11" height="4.5" fill="#8cc0ea" stroke="#0f6cbd" stroke-width="1.3"/><rect x="6" y="9.5" width="6" height="4.5" fill="#8cc0ea" stroke="#0f6cbd" stroke-width="1.3"/></g>
<g transform="translate(84 56)"><path d="M0.5 0V17.5H18" stroke="#252423" stroke-width="1" fill="none"/><rect x="3" y="5" width="2.5" height="2.5" fill="#8cc0ea" stroke="none" stroke-width="1"/><rect x="8" y="8" width="2.5" height="2.5" fill="#8cc0ea" stroke="none" stroke-width="1"/><rect x="13" y="11.5" width="2.5" height="2.5" fill="#8cc0ea" stroke="none" stroke-width="1"/><rect x="12.5" y="1" width="2.5" height="2.5" fill="#252423" stroke="none" stroke-width="1"/><rect x="3" y="12" width="2.5" height="2.5" fill="#252423" stroke="none" stroke-width="1"/></g>
<g transform="translate(112 56)"><circle cx="9" cy="9" r="8.3" fill="#fafafa" stroke="#252423" stroke-width="1.1"/><path d="M9 0.7A8.3 8.3 0 0 1 14.5 15.2L9 10z" fill="#8cc0ea" stroke="#0f6cbd" stroke-width="1.2"/></g>
<g transform="translate(140 56)"><circle cx="9" cy="9" r="6.3" fill="none" stroke="#fafafa" stroke-width="4"/><circle cx="9" cy="9" r="8.3" fill="none" stroke="#707070" stroke-width="0.8"/><circle cx="9" cy="9" r="4.3" fill="none" stroke="#707070" stroke-width="0.8"/><path d="M9 0.7A8.3 8.3 0 1 1 0.8 10.5H4.8A4.3 4.3 0 1 0 9 4.7z" fill="#8cc0ea" stroke="#0f6cbd" stroke-width="1.2"/></g>
<g transform="translate(0 84)"><rect x="0.5" y="0.5" width="17" height="17" fill="#fafafa" stroke="#252423" stroke-width="1.1"/><rect x="0.5" y="0.5" width="8" height="17" fill="#8cc0ea" stroke="#0f6cbd" stroke-width="1.2"/><path d="M0.5 9.5h8M8.5 6.5h9M12.5 6.5v11M8.5 12h9" stroke="#252423" stroke-width="1"/><path d="M0.5 9.5h8" stroke="#0f6cbd" stroke-width="1.2"/></g>
<g transform="translate(28 84)"><circle cx="9" cy="7.5" r="6" fill="#fafafa" stroke="#252423"/><path d="M5 4c2 0 3 1 2 3s2 2 3 1M9 9c2 1 3 2 2 4M10 3c2 1 4 1 4 3" stroke="#2e9e44" stroke-width="2" fill="none"/><path d="M6 1a8 8 0 0 0 7 13.5M9 15v2M4 17.5h10" stroke="#252423" fill="none"/></g>
<g transform="translate(56 84)"><path d="M1 1.5h3l2 2 3-2h7.5v14c-2 1-4 2-6 0l-1 2-6-3-2-3z" fill="#c8c8c8" stroke="#252423" stroke-width="1.1"/><path d="M1 1.5h3l3 2v5H1z" fill="#8cc0ea" stroke="#0f6cbd" stroke-width="1.2"/><path d="M10 10h6.5v5.5c-2 1-4 2-6 0l-1 2z" fill="#8cc0ea" stroke="#0f6cbd" stroke-width="1.2"/></g>
<g transform="translate(84 84)"><path d="M11 0L1 16l8-4z" fill="#3aa0d8"/><path d="M11 0l-2 12 7 6z" fill="#0f6cbd"/></g>
<g transform="translate(112 84)"><path d="M1.5 13.5a7.5 7.5 0 0 1 15 0h-3.5a4 4 0 0 0-8 0z" fill="#fafafa" stroke="#252423" stroke-width="1.1"/><path d="M5 6.5a7.5 7.5 0 0 1 11.5 7h-3.5a4 4 0 0 0-5-3.8z" fill="#8cc0ea" stroke="#0f6cbd" stroke-width="1.2"/><path d="M9 13l4-5" stroke="#252423" stroke-width="1.6"/></g>
<g transform="translate(140 84)"><rect x="1.5" y="3.5" width="16" height="13.5" fill="#fafafa" stroke="#252423" stroke-width="1.1"/><text x="4" y="12.5" font-family="Liberation Sans" font-size="8" fill="#5aaae8">123</text><path d="M3 14.5h12" stroke="#707070" stroke-width="0.8"/><path d="M2.5 0h6l-2.5 4h3L1.5 12 4 6H0.5z" fill="#f8c44f" stroke="#e06c00" stroke-width="0.8"/></g>
<g transform="translate(0 112)"><rect x="0.5" y="1.5" width="17" height="15" fill="#fafafa" stroke="#252423" stroke-width="1.2"/><path d="M2.5 10l2.5-4 2.5 4z" fill="#7cd488" stroke="#2e9e44"/><path d="M9.5 4.5h6l-3 5z" fill="#f06060" stroke="#d42020"/><path d="M2 12.5h14" stroke="#707070" stroke-width="0.9"/></g>
<g transform="translate(28 112)"><rect x="0.5" y="0.5" width="17" height="17" fill="#fafafa" stroke="#252423" stroke-width="1.1"/><rect x="1" y="1" width="16" height="2.5" fill="#c8c8c8" stroke="none" stroke-width="1"/><path d="M0.5 3.5h17" stroke="#252423" stroke-width="1"/><rect x="3" y="6.5" width="2.5" height="2.5" fill="#c8c8c8" stroke="#707070" stroke-width="0.8"/><rect x="3" y="11.5" width="2.5" height="2.5" fill="#c8c8c8" stroke="#707070" stroke-width="0.8"/><path d="M9.5 10.5h9l-3 4v4h-3v-4z" fill="#fafafa" stroke="#252423" stroke-width="1.1"/></g>
<g transform="translate(56 112)"><rect x="0.5" y="0.5" width="17" height="17" fill="#fafafa" stroke="#252423" stroke-width="1.1"/><rect x="1" y="1" width="16" height="2.5" fill="#c8c8c8" stroke="none" stroke-width="1"/><path d="M0.5 3.5h17M0.5 8h17M0.5 12.5h17M6 3.5v14M11.5 3.5v14" stroke="#707070" stroke-width="0.9"/><path d="M0.5 3.5h17" stroke="#252423"/></g>
<g transform="translate(84 112)"><rect x="0.5" y="0.5" width="17" height="17" fill="#fafafa" stroke="#252423" stroke-width="1.1"/><rect x="1" y="1" width="16" height="2.5" fill="#c8c8c8" stroke="none" stroke-width="1"/><rect x="12" y="4" width="5" height="13" fill="#8cc0ea" stroke="none" stroke-width="1"/><rect x="1" y="13" width="16" height="4" fill="#8cc0ea" stroke="none" stroke-width="1"/><path d="M0.5 3.5h17M0.5 8h17M6 3.5v14M11.5 3.5v14" stroke="#707070" stroke-width="0.9"/><path d="M0.5 12.5h17M11.5 3.5v14M0.5 3.5h17" stroke="#0f6cbd" stroke-width="1"/><rect x="0.5" y="0.5" width="17" height="17" fill="none" stroke="#252423" stroke-width="1.1"/></g>
<g transform="translate(112 112)"><text x="3.5" y="15" font-family="Liberation Sans" font-weight="bold" font-size="14" fill="#1a86d0">R</text></g>
<g transform="translate(140 112)"><text x="-1" y="14" font-family="Liberation Sans" font-weight="bold" font-size="14" fill="#1a86d0">Py</text></g>
<g transform="translate(0 140)"><path d="M0.5 0V17.5H18" stroke="#252423" stroke-width="1" fill="none"/><path d="M1 3.5h11" stroke="#1a86d0"/><circle cx="14" cy="3.5" r="2.2" fill="#8cc0ea" stroke="#0f6cbd" stroke-width="1.1"/><path d="M1 8h9M1 12h4" stroke="#707070"/><rect x="10" y="7" width="2" height="2" fill="#c8c8c8" stroke="#707070" stroke-width="0.8"/><rect x="5" y="11" width="2" height="2" fill="#c8c8c8" stroke="#707070" stroke-width="0.8"/></g>
<g transform="translate(28 140)"><rect x="0.5" y="6.5" width="6" height="4" fill="#8cc0ea" stroke="#0f6cbd" stroke-width="1.2"/><rect x="11.5" y="0.5" width="6" height="4" fill="#8cc0ea" stroke="#0f6cbd" stroke-width="1.2"/><rect x="11.5" y="6.5" width="6" height="4" fill="#8cc0ea" stroke="#0f6cbd" stroke-width="1.2"/><rect x="11.5" y="12.5" width="6" height="4" fill="#8cc0ea" stroke="#0f6cbd" stroke-width="1.2"/><path d="M6.5 8.5h5M9 2.5h2.5M9 2.5v12h2.5" stroke="#252423" fill="none"/></g>
<g transform="translate(56 140)"><path d="M0.5 1.5h16v11h-10l-4 4v-4H0.5z" fill="#fafafa" stroke="#0f6cbd" stroke-width="1.2"/></g>
<g transform="translate(84 140)"><path d="M1.5 4V1.5h9l4 4v12H1.5V8" fill="#fafafa" stroke="#252423" stroke-width="1.1"/><path d="M10.5 1.5v4h4" fill="none" stroke="#252423"/><circle cx="2" cy="6" r="1.6" fill="#8cc0ea" stroke="#0f6cbd"/><path d="M5.5 9h6M4 12h6" stroke="#1a86d0" stroke-width="1"/></g>
<g transform="translate(112 140)"><path d="M3 1.5h12v4c0 4-3 6-6 6s-6-2-6-6z" fill="#fafafa" stroke="#252423" stroke-width="1.1"/><path d="M3 2H0.5v3c0 2 2 3 3 3M15 2h2.5v3c0 2-2 3-3 3M9 11.5l-2 4M9 11.5l2 4" stroke="#252423" fill="none"/><path d="M4 1.5h10" stroke="#0f6cbd" stroke-width="1.5"/><rect x="5" y="15.5" width="8" height="2" fill="#8cc0ea" stroke="#0f6cbd" stroke-width="1"/></g>
<g transform="translate(140 140)"><path d="M1.5 17.5V0.5h9l6 6v11z" fill="#fafafa" stroke="#252423" stroke-width="1.2"/><path d="M10.5 0.5v6h6" stroke="#252423" fill="none"/><rect x="4" y="11" width="1.5" height="5" fill="#252423" stroke="none" stroke-width="1"/><rect x="7" y="13" width="1.5" height="3" fill="#252423" stroke="none" stroke-width="1"/><rect x="11" y="9" width="1.5" height="7" fill="#252423" stroke="none" stroke-width="1"/></g>
<g transform="translate(0 168)"><rect x="10.5" y="1" width="6" height="6" fill="#fafafa" stroke="#707070" stroke-width="0.9"/><rect x="1.5" y="10.5" width="6" height="6" fill="#fafafa" stroke="#707070" stroke-width="0.9"/><path d="M4 0h5l-2.5 4h2.5L1 12l2.5-6H0.5z" fill="#f8c44f" stroke="#e06c00" stroke-width="0.8"/><path d="M10.5 9.5h7.5l-2.5 3.5v4.5h-2.5v-4.5z" fill="#fafafa" stroke="#252423" stroke-width="1.1"/></g>
<g transform="translate(28 168)"><path d="M10 1.5h7v7M1.5 12v5.5h8.5" fill="none" stroke="#252423" stroke-width="1.1"/><path d="M5.5 14L9 4l1.5 4" stroke="#1a86d0" fill="none"/><path d="M4 0h5l-2.5 4h2.5L1 12l2.5-6H0.5z" fill="#f8c44f" stroke="#e06c00" stroke-width="0.8"/><path d="M10.5 9.5h7.5l-2.5 3.5v4.5h-2.5v-4.5z" fill="#fafafa" stroke="#252423" stroke-width="1.1"/></g>
<g transform="translate(56 168)"><path d="M10 1.5h7v7M1.5 12v5.5h8.5" fill="none" stroke="#252423" stroke-width="1.1"/><path d="M7 5.5h6" stroke="#707070"/><rect x="4" y="11" width="2" height="2" fill="#fafafa" stroke="#707070" stroke-width="0.8"/><path d="M4 0h5l-2.5 4h2.5L1 12l2.5-6H0.5z" fill="#f8c44f" stroke="#e06c00" stroke-width="0.8"/><path d="M10.5 9.5h7.5l-2.5 3.5v4.5h-2.5v-4.5z" fill="#fafafa" stroke="#252423" stroke-width="1.1"/></g>
<g transform="translate(84 168)"><rect x="0.5" y="2.5" width="17" height="13" fill="#fafafa" stroke="#252423" stroke-width="1.2"/><path d="M1 15l5.5-6 6 6zM9 13l3-3 4.5 5H11z" fill="#8cc0ea" stroke="#0f6cbd" stroke-width="1"/><circle cx="13" cy="6" r="1.2" fill="#e07a10"/></g>
<g transform="translate(112 168)"><path d="M7 1.5h10v8M1 11v6.5h10" fill="none" stroke="#0f6cbd" stroke-width="1.3"/><path d="M10 17l1-7 3-3h3v8c-1 2-4 2-7 2z" fill="#8cc0ea"/><path d="M1 1h5v6l-2.5 3L1 7z" fill="#e07a10"/><circle cx="3.5" cy="4" r="1.1" fill="#fff"/><circle cx="15" cy="15.5" r="2.3" fill="#e07a10"/><circle cx="17" cy="10.5" r="1.2" fill="#e07a10"/></g>
<g transform="translate(140 168)"><path d="M9 0.8L17.5 9 9 17.5 0.5 9Z" fill="none" stroke="#9b4dca" stroke-width="1.1"/><path d="M13 1.5l4.5 4.5M5 4.8L13.2 13.2M13.2 4.8L9 9" fill="none" stroke="#9b4dca" stroke-width="1.1"/></g>
<g transform="translate(0 196)"><path d="M0.5 1.5h10l7 7-7 7h-10l6-7z" fill="#fafafa" stroke="#1a86d0" stroke-width="1.3"/><path d="M14 4.5l-7.5 11M10 1.5L4 9" stroke="#1a86d0" stroke-width="1.1"/></g>
<g transform="translate(28 196)"><circle cx="3" cy="10" r="1" fill="#252423"/><circle cx="9" cy="10" r="1" fill="#252423"/><circle cx="15" cy="10" r="1" fill="#252423"/></g>
</svg><!-- dashed separator -->
<div class="a" style="left:2224px;top:464px;width:168px;height:1px;background:repeating-linear-gradient(to right,#d2d0ce 0 3px,transparent 3px 5px)"></div>
<div class="a" style="left:2218px;top:475px;width:180px;height:1px;background:#e1dfdd"></div>

<div class="t" style="left:2230px;top:487px;font-size:12px">値</div>
<div class="a" style="left:2222px;top:507px;width:170px;height:28px;background:#fff;border:1px dashed #c8c6c4"></div>
<div class="t" style="left:2234px;top:515px;font-size:12px;color:#252423">ここにデータ フィールドを...</div>

<div class="t" style="left:2231px;top:547px;font-size:12px;font-weight:bold">ドリルスルー</div>
<div class="t" style="left:2231px;top:573px;font-size:12px">クロス レポート</div>
<div class="a" style="left:2344px;top:571px;width:32px;height:16px;border:1px solid #605e5c;border-radius:8px;background:#fff"></div>
<div class="a" style="left:2348px;top:575px;width:8px;height:8px;border-radius:4px;background:#605e5c"></div>
<div class="t" style="left:2231px;top:600px;font-size:12px">すべてのフィルター</div>
<div class="t" style="left:2231px;top:617px;font-size:12px">を保持する</div>
<div class="a" style="left:2344px;top:597px;width:32px;height:16px;border-radius:8px;background:#117865"></div>
<svg class="a" style="left:2347px;top:600px" width="12" height="10" viewBox="0 0 12 10" fill="none" stroke="#fff" stroke-width="1.8"><path d="M1.5 5l3 3 6-6.5"/></svg>
<div class="a" style="left:2362px;top:601px;width:8px;height:8px;border-radius:4px;background:#fff"></div>
<div class="a" style="left:2222px;top:641px;width:170px;height:27px;background:#fff;border:1px dashed #c8c6c4"></div>
<div class="t" style="left:2232px;top:649px;font-size:12px;color:#252423">ドリルスルー フィールド...</div>

<!-- ===== DATA PANE ===== -->
<div class="t" style="left:2407px;top:140px;font-size:16px;font-weight:bold">データ</div>
<svg class="a" style="left:2557px;top:140px" width="15" height="14" viewBox="0 0 15 14" fill="none" stroke="#252423" stroke-width="1.2"><path d="M1.5 1.5L7 7l-5.5 5.5M7.5 1.5L13 7l-5.5 5.5"/></svg>
<div class="a" style="left:2403px;top:174px;width:180px;height:24px;background:#fff;border:1px solid #c8c6c4;border-bottom:1.5px solid #8a8886;border-radius:4px"></div>
<svg class="a" style="left:2413px;top:177px" width="18" height="18" viewBox="0 0 18 18" fill="none" stroke="#323130" stroke-width="1.1"><circle cx="6.7" cy="8" r="4.8"/><path d="M10.2 11.5L15 16"/></svg>
<div class="t" style="left:2437px;top:179px;font-size:14px;color:#8a8886">検索</div>

<svg class="a" style="left:2413px;top:213px" width="9" height="14" viewBox="0 0 9 14" fill="none" stroke="#605e5c" stroke-width="1"><path d="M2 1.5l5 5.5-5 5.5"/></svg>
<svg class="a" style="left:2427px;top:213px" width="14" height="14" viewBox="0 0 14 14" fill="none" stroke="#252423" stroke-width="1"><rect x="1.5" y="1.5" width="11" height="11" rx="2.5"/><path d="M1.5 5.2h11M1.5 8.8h11M5.2 1.5v11M8.8 1.5v11"/></svg>
<div class="t" style="left:2446px;top:214px;font-size:12px">business_negotiation</div>
<svg class="a" style="left:2413px;top:237px" width="9" height="14" viewBox="0 0 9 14" fill="none" stroke="#605e5c" stroke-width="1"><path d="M2 1.5l5 5.5-5 5.5"/></svg>
<svg class="a" style="left:2427px;top:237px" width="14" height="14" viewBox="0 0 14 14" fill="none" stroke="#252423" stroke-width="1"><rect x="1.5" y="1.5" width="11" height="11" rx="2.5"/><path d="M1.5 5.2h11M1.5 8.8h11M5.2 1.5v11M8.8 1.5v11"/></svg>
<div class="t" style="left:2446px;top:238px;font-size:12px">customer_master</div>
<svg class="a" style="left:2413px;top:261px" width="9" height="14" viewBox="0 0 9 14" fill="none" stroke="#605e5c" stroke-width="1"><path d="M2 1.5l5 5.5-5 5.5"/></svg>
<svg class="a" style="left:2427px;top:261px" width="14" height="14" viewBox="0 0 14 14" fill="none" stroke="#252423" stroke-width="1"><rect x="1.5" y="1.5" width="11" height="11" rx="2.5"/><path d="M1.5 5.2h11M1.5 8.8h11M5.2 1.5v11M8.8 1.5v11"/></svg>
<div class="t" style="left:2446px;top:262px;font-size:12px">purchase</div>
<!-- ===== PAGE BAR ===== -->
<svg class="a" style="left:71px;top:1304px" width="22" height="16" viewBox="0 0 22 16" fill="none" stroke="#605e5c" stroke-width="1.2">
 <rect x="1.6" y="1.6" width="18" height="11"/><path d="M10.6 12.6v2.5M7 15.4h7.4"/>
</svg>
<div class="a" style="left:70px;top:1326px;width:24px;height:3px;border-radius:2px;background:#117865"></div>
<svg class="a" style="left:118px;top:1302px" width="16" height="22" viewBox="0 0 16 22" fill="none" stroke="#605e5c" stroke-width="1.2">
 <rect x="1.6" y="1.6" width="12" height="19" rx="1"/><rect x="7" y="16.5" width="1.5" height="1.3" fill="#605e5c" stroke="none"/>
</svg>
<svg class="a" style="left:153px;top:1311px" width="6" height="9" viewBox="0 0 6 9"><path d="M5 0.5L1 4.5l4 4z" fill="#c8c6c4"/></svg>
<svg class="a" style="left:174px;top:1311px" width="6" height="9" viewBox="0 0 6 9"><path d="M1 0.5l4 4-4 4z" fill="#c8c6c4"/></svg>
<div class="a" style="left:187px;top:1298px;width:86px;height:35px;background:#fff;border-left:1px solid #e1dfdd"></div>
<div class="a" style="left:188px;top:1329px;width:85px;height:4px;background:#117865"></div>
<div class="t" style="left:208px;top:1310px;font-size:12px;color:#252423">ページ 1</div>
<div class="a" style="left:273px;top:1298px;width:39px;height:35px;background:#117865"></div>
<svg class="a" style="left:285px;top:1308px" width="14" height="14" viewBox="0 0 14 14" fill="none" stroke="#fff" stroke-width="2.4"><path d="M7 1v12M1 7h12"/></svg>

<!-- ===== STATUS BAR ===== -->
<div class="t" style="left:22px;top:1341px;font-size:11.5px;color:#484644">ページ 1/1</div>
<div class="a" style="left:2367px;top:1345px;width:5px;height:1.5px;background:#605e5c"></div>
<div class="a" style="left:2376px;top:1345px;width:100px;height:1px;background:#8a8886"></div>
<div class="a" style="left:2426px;top:1341px;width:1px;height:8px;background:#605e5c"></div>
<div class="a" style="left:2435px;top:1340px;width:4px;height:11px;background:#605e5c"></div>
<svg class="a" style="left:2481px;top:1340px" width="10" height="10" viewBox="0 0 10 10" fill="none" stroke="#605e5c" stroke-width="1.3"><path d="M5 1v8M1 5h8"/></svg>
<div class="t" style="left:2503px;top:1340px;font-size:11.5px;color:#605e5c">162%</div>
<svg class="a" style="left:2544px;top:1339px" width="18" height="14" viewBox="0 0 18 14" fill="none" stroke="#605e5c" stroke-width="1.1">
 <rect x="1.5" y="1.5" width="15" height="11"/><path d="M4 6V4h2.5M11.5 4H14v2M14 8v2h-2.5M6.5 10H4V8"/>
</svg>
<div class="red" style="left:0;top:121px;width:94px;height:58px"></div>
<div class="red" style="left:2197px;top:110px;width:231px;height:671px"></div>
</body></html>
